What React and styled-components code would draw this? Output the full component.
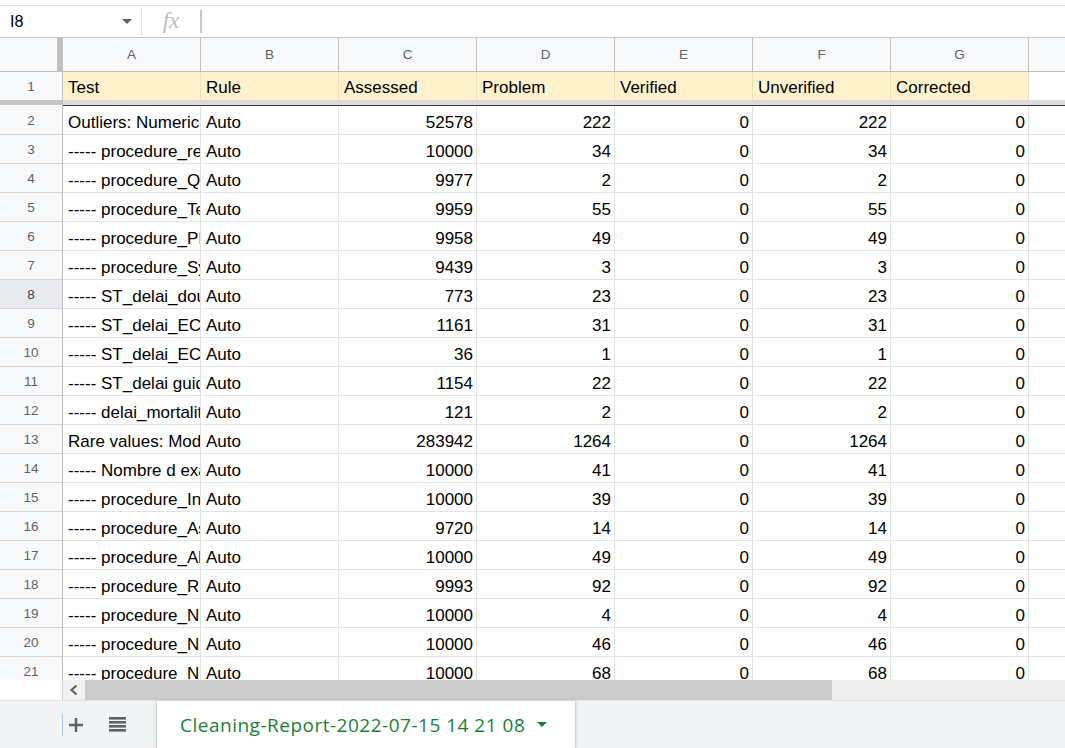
import React from 'react';
import styled, { createGlobalStyle } from 'styled-components';

const GlobalStyle = createGlobalStyle`
  html, body { margin: 0; padding: 0; background: #fff; }
  body { font-family: "Liberation Sans", Arial, sans-serif; }
  * { box-sizing: border-box; }
`;

const Page = styled.div`
  width: 1065px;
  height: 748px;
  display: flex;
  flex-direction: column;
  overflow: hidden;
  background: #fff;
`;

const FormulaBar = styled.div`
  margin-top: 5px;
  height: 33px;
  flex-shrink: 0;
  border-top: 1px solid #e1e1e1;
  border-bottom: 1px solid #c7c7c7;
  display: flex;
  align-items: center;
`;

const NameBox = styled.div`
  width: 141px;
  height: 100%;
  display: flex;
  align-items: center;
  justify-content: space-between;
  padding: 0 9px 0 10px;
  font-size: 16px;
  color: #000;
`;

const Caret = styled.span`
  width: 0;
  height: 0;
  border-left: ${p => p.$size}px solid transparent;
  border-right: ${p => p.$size}px solid transparent;
  border-top: ${p => p.$size}px solid ${p => p.$color};
`;

const VSep = styled.div`
  width: 1px;
  height: 26px;
  background: #e0e0e0;
`;

const Fx = styled.div`
  width: 58px;
  display: flex;
  justify-content: center;
  font-family: "Liberation Serif", "Times New Roman", serif;
  font-style: italic;
  font-size: 23px;
  color: #bdbdbd;
  line-height: 1;
  padding-bottom: 3px;
`;

const InputBar = styled.div`
  width: 2px;
  height: 23px;
  background: #c8c8c8;
`;

const Sheet = styled.div`
  height: 642px;
  flex-shrink: 0;
  overflow: hidden;
  display: flex;
  flex-direction: column;
`;

const GridRow = styled.div`
  display: grid;
  grid-template-columns: 63px repeat(7, 138px) 1fr;
  height: ${p => p.$h}px;
  flex-shrink: 0;
`;

const Corner = styled.div`
  background: #f8f9fa;
  border-right: 6px solid #c0c0c0;
  border-bottom: 1px solid #c0c0c0;
`;

const ColLetter = styled.div`
  background: #f8f9fa;
  border-right: ${p => (p.$last ? 'none' : '1px solid #c0c0c0')};
  border-bottom: 1px solid #c0c0c0;
  display: flex;
  align-items: center;
  justify-content: center;
  font-size: 13.5px;
  color: #5f6368;
  padding-bottom: 1px;
`;

const RowHead = styled.div`
  background: ${p => (p.$selected ? '#e8eaed' : '#f8f9fa')};
  border-right: 1px solid #c0c0c0;
  border-bottom: ${p => (p.$noBottom ? 'none' : '1px solid #d4d4d4')};
  display: flex;
  align-items: center;
  justify-content: center;
  font-size: 13.5px;
  color: ${p => (p.$selected ? '#3c4043' : '#5f6368')};
`;

const HeadCell = styled.div`
  background: ${p => (p.$blank ? '#fff' : '#fff2cc')};
  border-right: ${p => (p.$blank ? 'none' : '1px solid #ecdfb9')};
  display: flex;
  align-items: flex-end;
  padding: 0 3px 2px 5px;
  font-size: 17px;
  color: #000;
  white-space: nowrap;
  overflow: hidden;
`;

const Cell = styled.div`
  border-right: ${p => (p.$last ? 'none' : '1px solid #e2e3e3')};
  border-bottom: 1px solid #e2e3e3;
  display: flex;
  align-items: flex-end;
  justify-content: ${p => (p.$num ? 'flex-end' : 'flex-start')};
  padding: 0 3px 1px 5px;
  font-size: 17px;
  color: #000;
  white-space: nowrap;
  overflow: hidden;
`;

const Divider = styled.div`
  display: grid;
  grid-template-columns: 63px 1fr;
  height: 6px;
  flex-shrink: 0;
`;

const DividerHead = styled.div`
  border-top: 5px solid #c4c4c4;
  background: #f8f9fa;
  border-right: 1px solid #c0c0c0;
`;

const DividerBody = styled.div`
  border-top: 5px solid #dcdcdc;
  background: #3a3a3a;
`;

const ScrollRow = styled.div`
  height: 20px;
  flex-shrink: 0;
  display: grid;
  grid-template-columns: 63px 22px 747px 1fr;
`;

const ScrollLeft = styled.div`
  background: #fff;
  border-right: 1px solid #d0d0d0;
`;

const ScrollArrow = styled.div`
  background: #f1f1f1;
  display: flex;
  align-items: center;
  justify-content: center;
`;

const ScrollThumb = styled.div`
  background: #cbcbcb;
`;

const ScrollTrack = styled.div`
  background: #efefef;
`;

const TabBar = styled.div`
  height: 48px;
  flex-shrink: 0;
  background: #f1f3f4;
  border-top: 1px solid #e4e4e4;
  display: flex;
  align-items: center;
  padding-left: 62px;
`;

const FocusLine = styled.div`
  width: 1px;
  height: 22px;
  background: #a8c7fa;
`;

const IconSlot = styled.div`
  margin-left: ${p => p.$ml}px;
  display: flex;
  align-items: center;
`;

const SheetTab = styled.div`
  margin-left: 31px;
  align-self: stretch;
  width: 418px;
  background: #fff;
  box-shadow: 0 1px 3px 1px rgba(60, 64, 67, 0.15), 0 1px 2px rgba(60, 64, 67, 0.3);
  display: flex;
  align-items: center;
  padding-left: 23px;
  gap: 12px;
  font-family: "Open Sans", Roboto, "Liberation Sans", sans-serif;
  font-weight: 500;
  font-size: 19px;
  letter-spacing: 0.5px;
  color: #188038;
  white-space: nowrap;
`;

const columns = ['A', 'B', 'C', 'D', 'E', 'F', 'G'];
const headers = ['Test', 'Rule', 'Assessed', 'Problem', 'Verified', 'Unverified', 'Corrected'];

const rows = [
  ['Outliers: Numeric values', 52578, 222],
  ['----- procedure_reperfusion', 10000, 34],
  ['----- procedure_Qualite', 9977, 2],
  ['----- procedure_Temps', 9959, 55],
  ['----- procedure_PI', 9958, 49],
  ['----- procedure_Sy', 9439, 3],
  ['----- ST_delai_douleur', 773, 23],
  ['----- ST_delai_ECG', 1161, 31],
  ['----- ST_delai_ECG_2', 36, 1],
  ['----- ST_delai guide', 1154, 22],
  ['----- delai_mortalite', 121, 2],
  ['Rare values: Mode', 283942, 1264],
  ['----- Nombre d examens', 10000, 41],
  ['----- procedure_In', 10000, 39],
  ['----- procedure_Ass', 9720, 14],
  ['----- procedure_Al', 10000, 49],
  ['----- procedure_R', 9993, 92],
  ['----- procedure_N', 10000, 4],
  ['----- procedure_N', 10000, 46],
  ['----- procedure_N', 10000, 68],
];

const PlusIcon = () => (
  <svg width="14" height="14" viewBox="0 0 14 14">
    <rect x="5.75" y="0" width="2.5" height="14" fill="#5f6368" />
    <rect x="0" y="5.75" width="14" height="2.5" fill="#5f6368" />
  </svg>
);

const ListIcon = () => (
  <svg width="17" height="15" viewBox="0 0 17 15">
    {[0, 4, 8, 12].map(y => (
      <rect key={y} x="0" y={y} width="17" height="2.6" fill="#5f6368" />
    ))}
  </svg>
);

const ChevronLeft = () => (
  <svg width="10" height="12" viewBox="0 0 10 12">
    <polyline points="7.5,1.5 2.5,6 7.5,10.5" fill="none" stroke="#5f6368" strokeWidth="2.2" />
  </svg>
);

export default function App() {
  return (
    <Page>
      <GlobalStyle />
      <FormulaBar>
        <NameBox>
          <span>I8</span>
          <Caret $size={5.5} $color="#5f6368" />
        </NameBox>
        <VSep />
        <Fx>fx</Fx>
        <InputBar />
      </FormulaBar>

      <Sheet>
        <GridRow $h={34}>
          <Corner />
          {columns.map(c => (
            <ColLetter key={c}>{c}</ColLetter>
          ))}
          <ColLetter $last />
        </GridRow>

        <GridRow $h={28}>
          <RowHead $noBottom>1</RowHead>
          {headers.map(h => (
            <HeadCell key={h}>{h}</HeadCell>
          ))}
          <HeadCell $blank />
        </GridRow>

        <Divider>
          <DividerHead />
          <DividerBody />
        </Divider>

        {rows.map(([name, assessed, problem], i) => (
          <GridRow $h={29} key={i}>
            <RowHead $selected={i + 2 === 8}>{i + 2}</RowHead>
            <Cell>{name}</Cell>
            <Cell>Auto</Cell>
            <Cell $num>{assessed}</Cell>
            <Cell $num>{problem}</Cell>
            <Cell $num>0</Cell>
            <Cell $num>{problem}</Cell>
            <Cell $num>0</Cell>
            <Cell $last />
          </GridRow>
        ))}
      </Sheet>

      <ScrollRow>
        <ScrollLeft />
        <ScrollArrow>
          <ChevronLeft />
        </ScrollArrow>
        <ScrollThumb />
        <ScrollTrack />
      </ScrollRow>

      <TabBar>
        <FocusLine />
        <IconSlot $ml={6}>
          <PlusIcon />
        </IconSlot>
        <IconSlot $ml={26}>
          <ListIcon />
        </IconSlot>
        <SheetTab>
          <span>Cleaning-Report-2022-07-15 14 21 08</span>
          <Caret $size={5.5} $color="#188038" />
        </SheetTab>
      </TabBar>
    </Page>
  );
}
